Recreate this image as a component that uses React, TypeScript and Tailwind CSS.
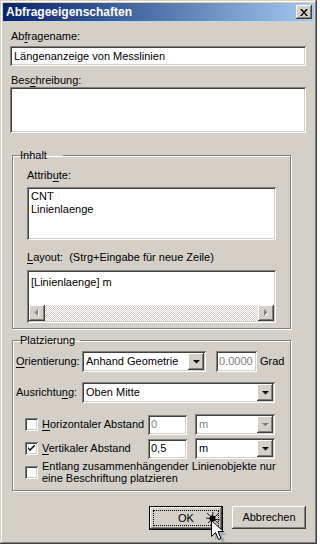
import React from 'react'

const sunken =
  'shadow-[inset_1px_1px_0_#808080,inset_-1px_-1px_0_#ffffff,inset_2px_2px_0_#404040,inset_-2px_-2px_0_#d4d0c8]'
const raised =
  'shadow-[inset_-1px_-1px_0_#404040,inset_1px_1px_0_#ffffff,inset_-2px_-2px_0_#808080,inset_2px_2px_0_#d4d0c8]'
const groupBox =
  'border border-[#808080] shadow-[1px_1px_0_#ffffff,inset_1px_1px_0_#ffffff] mx-[2px] w-[279px]'

function U({ children }: { children: React.ReactNode }) {
  return <span className="underline underline-offset-[2px]">{children}</span>
}

function DownArrow({ disabled }: { disabled?: boolean }) {
  return (
    <svg width="9" height="6" viewBox="0 0 9 6">
      {disabled && <path d="M2 2h6L5 5z" fill="#ffffff" />}
      <path d="M1 1h7L4.5 4.5z" fill={disabled ? '#808080' : '#000000'} />
    </svg>
  )
}

function Combo({ value, width, disabled }: { value: string; width: string; disabled?: boolean }) {
  return (
    <div className={`${width} h-[21px] bg-white ${sunken} flex items-center p-[2px] shrink-0`}>
      <span className={`flex-1 pl-[2px] ${disabled ? 'text-[#808080]' : 'text-black'}`}>{value}</span>
      <div className={`w-[16px] h-[17px] bg-[#d4d0c8] ${raised} flex items-center justify-center`}>
        <DownArrow disabled={disabled} />
      </div>
    </div>
  )
}

function Check({ checked }: { checked?: boolean }) {
  return (
    <div className={`w-[13px] h-[13px] bg-white ${sunken} flex items-center justify-center shrink-0`}>
      {checked && (
        <svg width="7" height="7" viewBox="0 0 7 7">
          <path d="M0 2v2l2 2 5-5V-1L2 4z" fill="#000000" />
        </svg>
      )}
    </div>
  )
}

function ScrollBtn({ dir }: { dir: 'left' | 'right' }) {
  return (
    <div className={`w-[16px] h-[16px] bg-[#d4d0c8] ${raised} flex items-center justify-center`}>
      <svg width="6" height="8" viewBox="0 0 6 8">
        {dir === 'left' ? (
          <>
            <path d="M5 1v7L1.5 4.5z" fill="#ffffff" />
            <path d="M4 0v7L0.5 3.5z" fill="#808080" />
          </>
        ) : (
          <>
            <path d="M2 1v7l3.5-3.5z" fill="#ffffff" />
            <path d="M1 0v7l3.5-3.5z" fill="#808080" />
          </>
        )}
      </svg>
    </div>
  )
}

export default function App() {
  return (
    <div className="relative w-[320px] h-[554px] bg-white overflow-hidden font-['Liberation_Sans',Arial,sans-serif] text-[11px] leading-[13px] text-black">
      <div className="w-[317px] h-[544px] bg-[#d4d0c8] p-[3px] shadow-[inset_-1px_-1px_0_#404040,inset_1px_1px_0_#d4d0c8,inset_-2px_-2px_0_#808080,inset_2px_2px_0_#ffffff] flex flex-col">
        {/* title bar */}
        <div className="h-[18px] bg-gradient-to-r from-[#0a246a] to-[#a6caf0] flex items-center justify-between pl-[3px] pr-[2px] shrink-0">
          <span className="text-white font-bold text-[12px] leading-[14px]">Abfrageeigenschaften</span>
          <div className={`w-[16px] h-[14px] bg-[#d4d0c8] ${raised} flex items-center justify-center`}>
            <svg width="8" height="7" viewBox="0 0 8 7">
              <path d="M0 0h2l2 2.5L6 0h2L5 3.5 8 7H6L4 4.5 2 7H0l3-3.5z" fill="#000000" />
            </svg>
          </div>
        </div>

        <div className="flex flex-col pl-[7px]">
          <div className="mt-[9px] pl-[1px]">
            Ab<U>f</U>ragename:
          </div>
          <div className={`mt-[3px] w-[296px] h-[20px] bg-white ${sunken} flex items-center pl-[4px]`}>
            Längenanzeige von Messlinien
          </div>
          <div className="mt-[8px] pl-[1px]">
            Bes<U>c</U>hreibung:
          </div>
          <div className={`w-[296px] h-[46px] bg-white ${sunken}`} />

          {/* Inhalt */}
          <fieldset className={`mt-[16px] ${groupBox} px-[14px] pb-[5px]`}>
            <legend className="ml-[5px] px-[2px] -translate-x-[14px]">Inhalt</legend>
            <div className="mt-[7px]">
              Attrib<U>u</U>te:
            </div>
            <div className={`mt-[5px] w-[249px] h-[53px] bg-white ${sunken} pt-[3px] pl-[4px]`}>
              <div>CNT</div>
              <div>Linienlaenge</div>
            </div>
            <div className="mt-[11px]">
              <U>L</U>ayout:&nbsp; (Strg+Eingabe für neue Zeile)
            </div>
            <div className={`mt-[6px] w-[249px] h-[53px] bg-white ${sunken} p-[2px] flex flex-col`}>
              <div className="flex-1 pl-[2px] pt-[4px]">[Linienlaenge] m</div>
              <div className="h-[16px] flex">
                <ScrollBtn dir="left" />
                <div className="flex-1 bg-[image:repeating-conic-gradient(#d4d0c8_0%_25%,#ffffff_0%_50%)] bg-[length:2px_2px]" />
                <ScrollBtn dir="right" />
              </div>
            </div>
          </fieldset>

          {/* Platzierung */}
          <fieldset className={`mt-[5px] ${groupBox} pl-[3px] pb-[6px]`}>
            <legend className="ml-[5px] px-[2px] -translate-x-[3px]">Platzierung</legend>
            <div className="mt-[4px] flex items-center">
              <span className="w-[66px] shrink-0">
                <U>O</U>rientierung:
              </span>
              <Combo value="Anhand Geometrie" width="w-[124px]" />
              <div className={`ml-[10px] w-[41px] h-[21px] bg-white ${sunken} flex items-center pl-[3px] text-[#808080]`}>
                0.0000
              </div>
              <span className="ml-[3px]">Grad</span>
            </div>
            <div className="mt-[10px] flex items-center">
              <span className="w-[66px] shrink-0">
                Ausrichtu<U>n</U>g:
              </span>
              <Combo value="Oben Mitte" width="w-[193px]" />
            </div>
            <div className="mt-[11px] flex items-center pl-[9px]">
              <Check />
              <span className="ml-[4px] w-[106px] shrink-0">
                <U>H</U>orizontaler Abstand
              </span>
              <div className={`w-[39px] h-[20px] bg-white ${sunken} flex items-center pl-[3px] text-[#808080]`}>0</div>
              <div className="ml-[8px]">
                <Combo value="m" width="w-[80px]" disabled />
              </div>
            </div>
            <div className="mt-[3px] flex items-center pl-[9px]">
              <Check checked />
              <span className="ml-[4px] w-[106px] shrink-0">
                <U>V</U>ertikaler Abstand
              </span>
              <div className={`w-[39px] h-[20px] bg-white ${sunken} flex items-center pl-[3px]`}>0,5</div>
              <div className="ml-[8px]">
                <Combo value="m" width="w-[80px]" />
              </div>
            </div>
            <div className="mt-[1px] flex items-center pl-[9px]">
              <Check />
              <span className="ml-[4px] leading-[12px]">
                Entlang zusammenhängender Linienobjekte nur
                <br />
                eine Beschriftung platzieren
              </span>
            </div>
          </fieldset>

          {/* buttons */}
          <div className="mt-[15px] flex justify-end gap-[9px] pr-[8px]">
            <div className="w-[74px] h-[24px] border border-black bg-[#d4d0c8] shadow-[inset_-1px_-1px_0_#404040,inset_1px_1px_0_#ffffff,inset_-2px_-2px_0_#808080] p-[3px]">
              <div className="w-full h-full border border-dotted border-black flex items-center justify-center">OK</div>
            </div>
            <div className={`w-[74px] h-[23px] bg-[#d4d0c8] ${raised} flex items-center justify-center`}>
              Abbrechen
            </div>
          </div>
        </div>
      </div>

      {/* mouse pointer over OK */}
      <svg className="absolute left-[202px] top-[510px]" width="30" height="34" viewBox="0 0 30 34">
        <g stroke="#000000" strokeWidth="1" opacity="0.85">
          <path d="M4 8l14 2M11 2l-2 14M5 3l11 10M16 4L6 13" />
        </g>
        <circle cx="10.5" cy="8.5" r="3" fill="#000000" />
        <path d="M11 12l0 16 4-4 3 7 3-1-3-7 5 0z" fill="#7a8aa8" opacity="0.5" transform="translate(2 2)" />
        <path d="M9.5 10.5v16l4-4 3 7 2.5-1-3-7h5.5z" fill="#ffffff" stroke="#000000" strokeWidth="1" />
      </svg>
    </div>
  )
}
